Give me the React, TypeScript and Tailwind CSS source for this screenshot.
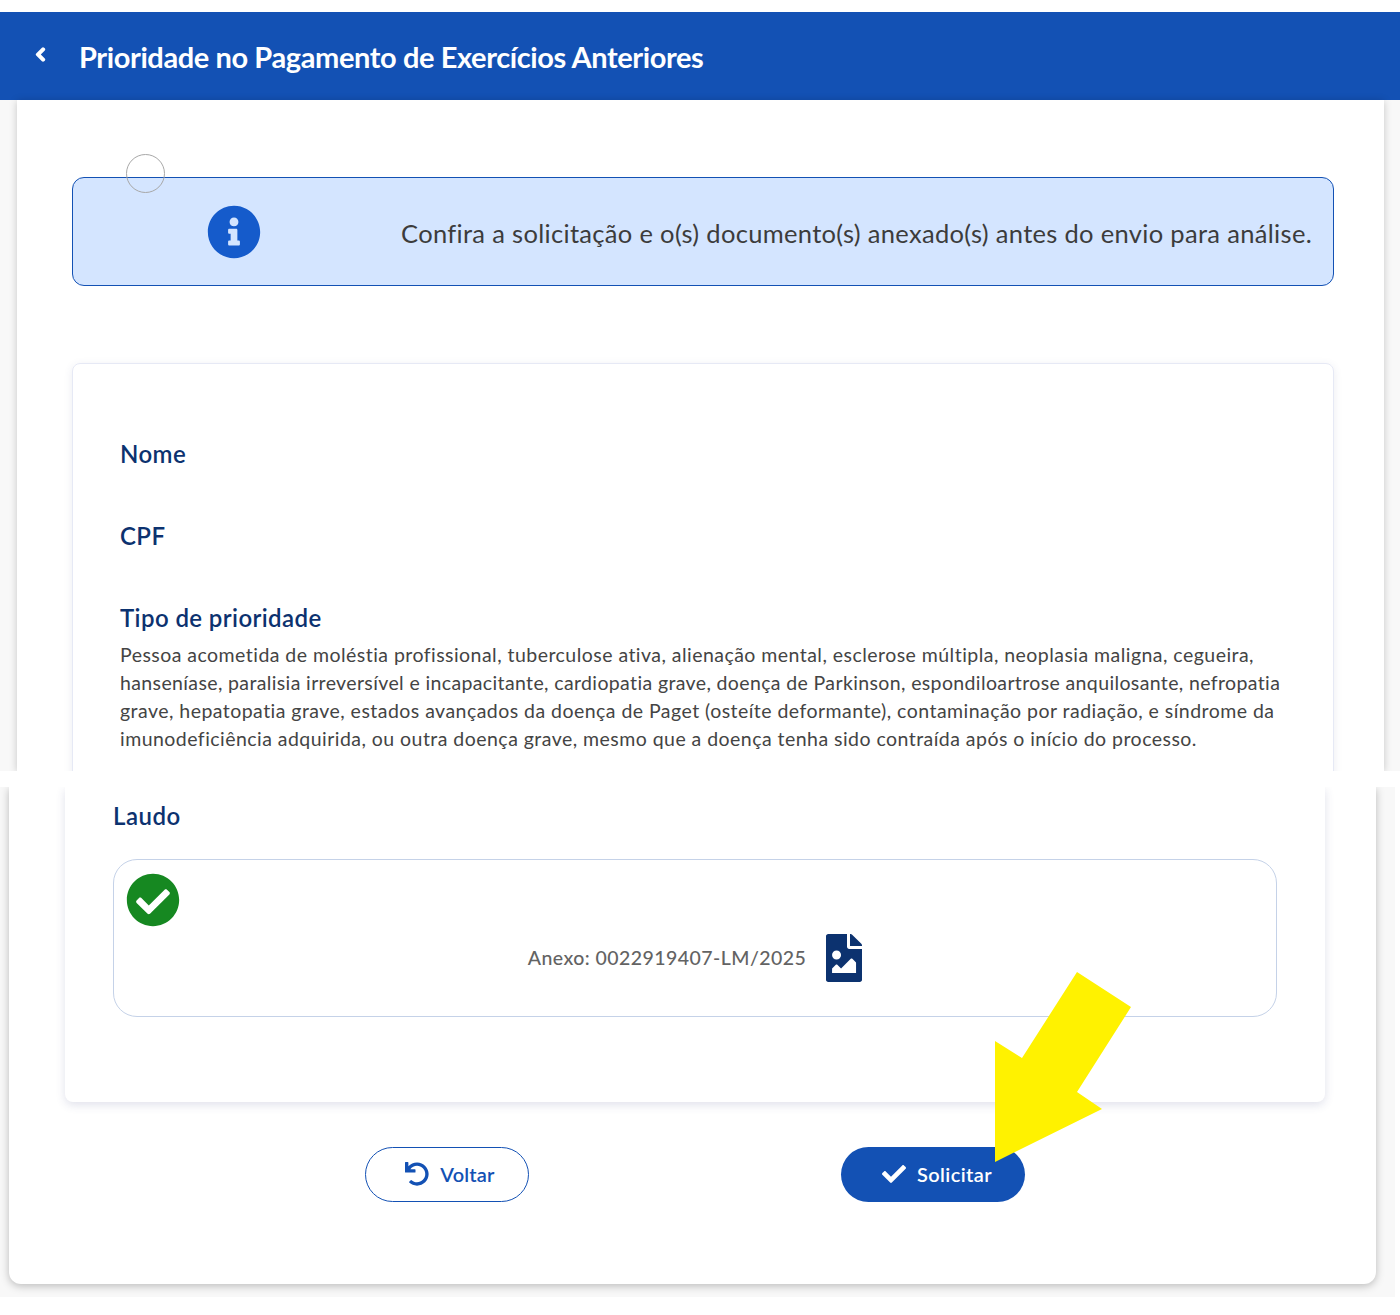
import { FaCheck, FaCheckCircle, FaChevronLeft, FaFileImage, FaInfoCircle, FaUndo } from "react-icons/fa";

const FONT = "font-['Lato','Open_Sans',sans-serif]";

// Parte de cima: cabeçalho, aviso e dados da solicitação (cortada em 771px).
function TopSection() {
  return (
    <div className="h-[771px] overflow-hidden pt-3">
      <div className="flex h-[88px] items-center bg-[#1351b4] pl-[35px] text-white">
        <FaChevronLeft size={12} className="mb-[3px] h-[15px] w-[11px]" stroke="white" strokeWidth={60} />
        <h1 className="ml-[33px] pt-0.5 text-[29px] leading-9 font-bold tracking-[-0.4px]">
          Prioridade no Pagamento de Exercícios Anteriores
        </h1>
      </div>
      <div className="h-[671px] bg-[#f8f8f8]">
        <div className="ml-[17px] h-full w-[1367px] bg-white pt-[77px] pl-[55px] shadow-[0_1px_8px_rgba(0,0,0,0.2)]">
          <div className="relative flex h-[109px] w-[1262px] items-center rounded-xl border border-[#1351b4] bg-[#d4e5ff] pl-[134px]">
            <span className="absolute top-[-24px] left-[53px] h-[39px] w-[39px] rounded-full border border-[#a8a8a8]" />
            <FaInfoCircle size={54} className="text-[#155bcb]" />
            <p className="ml-auto pt-1 pr-[21px] text-[25.5px] tracking-[0.32px] text-[#3c3c3c]">
              Confira a solicitação e o(s) documento(s) anexado(s) antes do envio para análise.
            </p>
          </div>
          <div className="mt-[77px] h-[600px] w-[1262px] rounded-lg border border-[#e6e9f5] pt-[74px] pl-[47px] shadow-[0_2px_8px_rgba(60,70,130,0.1)]">
            <h2 className="text-[24px] leading-8 font-semibold tracking-[0.4px] text-[#0c326f]">Nome</h2>
            <h2 className="mt-[50px] text-[24px] leading-8 font-semibold tracking-[0.4px] text-[#0c326f]">CPF</h2>
            <h2 className="mt-[50px] text-[24px] leading-8 font-semibold tracking-[0.4px] text-[#0c326f]">Tipo de prioridade</h2>
            <p className="mt-[7px] text-[19.5px] leading-7 tracking-[0.46px] whitespace-nowrap text-[#444444]">
              Pessoa acometida de moléstia profissional, tuberculose ativa, alienação mental, esclerose múltipla, neoplasia maligna, cegueira,
              <br />
              <span className="tracking-[0.37px]">
                hanseníase, paralisia irreversível e incapacitante, cardiopatia grave, doença de Parkinson, espondiloartrose anquilosante, nefropatia
              </span>
              <br />
              grave, hepatopatia grave, estados avançados da doença de Paget (osteíte deformante), contaminação por radiação, e síndrome da
              <br />
              imunodeficiência adquirida, ou outra doença grave, mesmo que a doença tenha sido contraída após o início do processo.
            </p>
          </div>
        </div>
      </div>
    </div>
  );
}

// Parte de baixo: laudo anexado e botões.
function BottomSection() {
  return (
    <div className="h-[510px] w-[1395px] overflow-hidden bg-[#f8f8f8]">
      <div className="ml-[9px] h-[497px] w-[1367px] rounded-b-xl bg-white pl-14 shadow-[0_2px_8px_rgba(0,0,0,0.25)]">
        <div className="h-[315px] w-[1260px] rounded-b-lg bg-white pt-[13px] pl-12 shadow-[0_3px_10px_rgba(60,70,130,0.16)]">
          <h2 className="text-[24px] leading-8 font-semibold tracking-[0.5px] text-[#0c326f]">Laudo</h2>
          <div className="mt-[27px] h-[158px] w-[1164px] rounded-3xl border border-[#c5d2e8] pt-[13px] pl-3">
            <FaCheckCircle size={54} className="text-[#168821]" />
            <div className="mt-[7px] flex items-center justify-center pr-[6px]">
              <span className="text-[19.5px] font-medium tracking-[0.45px] text-[#636363]">Anexo: 0022919407-LM/2025</span>
              <FaFileImage size={48} className="ml-3.5 text-[#0c326f]" />
            </div>
          </div>
        </div>
        <div className="mt-[45px] flex pl-[300px]">
          <button className="flex h-[55px] w-[164px] items-center justify-center gap-[11px] rounded-full border border-[#1351b4] bg-white pb-0.5 pl-1.5 text-[20px] font-semibold tracking-[0.2px] text-[#1351b4]">
            <FaUndo size={24} />
            Voltar
          </button>
          <button className="ml-[312px] flex h-[55px] w-[184px] items-center justify-center gap-[11px] rounded-full bg-[#1351b4] pb-0.5 pl-2 text-[20px] font-semibold tracking-[0.4px] text-white">
            <FaCheck size={24} />
            Solicitar
          </button>
        </div>
      </div>
    </div>
  );
}

export default function App() {
  return (
    <div className={`relative h-[1315px] overflow-hidden bg-white ${FONT}`}>
      <TopSection />
      <div className="h-4 bg-white" />
      <BottomSection />
      {/* seta amarela colada por cima do print */}
      <svg className="absolute top-[972px] left-[994px]" width="138" height="191" viewBox="994 972 138 191">
        <polygon points="1077,972 1131,1007 1077,1092 1102,1109 995,1162 995,1041 1022,1058" fill="#fff200" />
      </svg>
    </div>
  );
}
